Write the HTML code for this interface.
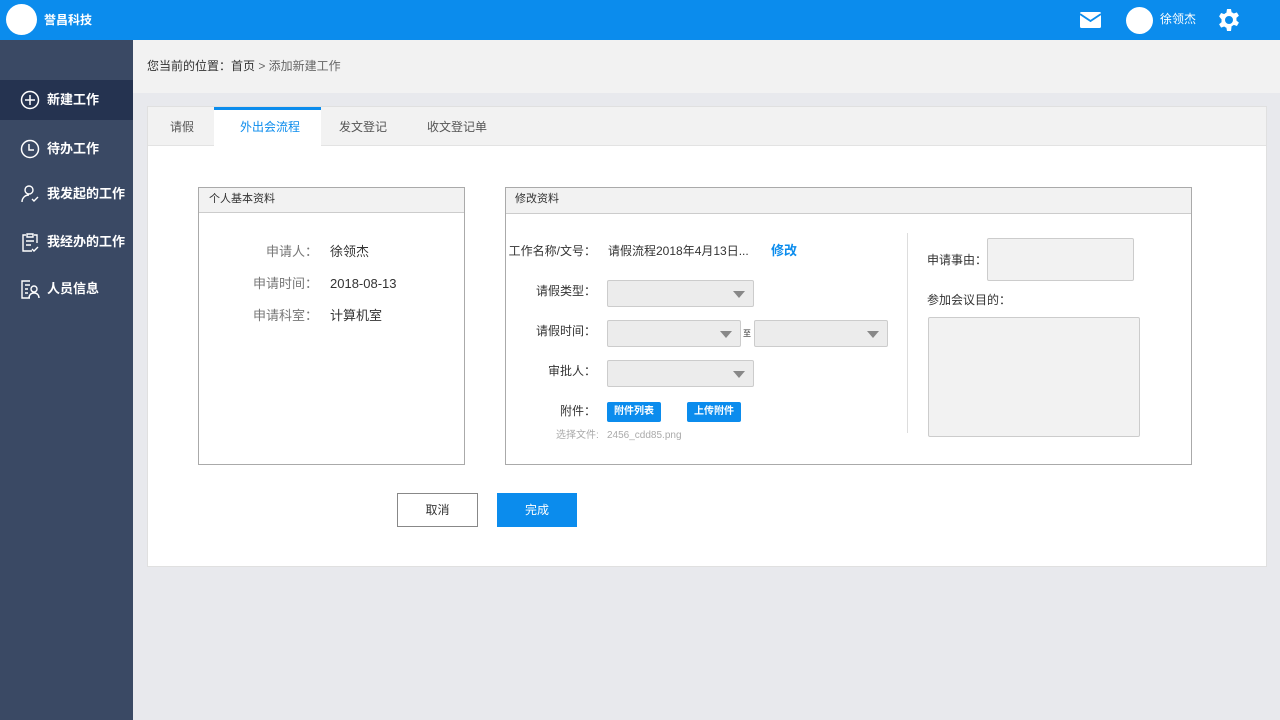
<!DOCTYPE html>
<html><head><meta charset="utf-8"><style>
*{margin:0;padding:0;box-sizing:border-box}
body{width:1280px;height:720px;overflow:hidden;background:#e8e9ed;font-family:"Liberation Sans","Noto Sans CJK SC",sans-serif;font-size:12px;color:#333;position:relative}
.a{position:absolute;line-height:1.2}
.hdr{left:0;top:0;width:1280px;height:40px;background:#0b8ced}
.side{left:0;top:40px;width:133px;height:680px;background:#3a4964}
.nav{left:0;width:133px;height:40px;color:#fff;font-size:13px;display:flex;align-items:center;padding-left:20px;font-weight:bold}
.nav svg{margin-right:7px}
.sel{background:#ececec;border:1px solid #ccc;border-radius:2px;height:27px}
.sel:after{content:"";position:absolute;right:8px;top:10px;border-left:6px solid transparent;border-right:6px solid transparent;border-top:7px solid #888}
.lab{text-align:right;width:150px;font-size:12px}
.btn{background:#0b8ced;color:#fff;font-size:10px;font-weight:bold;display:flex;align-items:center;justify-content:center;border-radius:2px}
</style></head><body>
<div class="a hdr"></div>
<div class="a" style="left:6px;top:4px;width:31px;height:31px;border-radius:50%;background:#fff"></div>
<div class="a" style="left:44px;top:13px;color:#fff;font-size:12px;font-weight:bold">誉昌科技</div>
<svg class="a" style="left:1080px;top:12px" width="21" height="16" viewBox="0 0 21 16"><rect x="0" y="0" width="21" height="16" rx="1.5" fill="#fff"/><path d="M0 2 L10.5 9 L21 2" stroke="#0b8ced" stroke-width="1.8" fill="none"/></svg>
<div class="a" style="left:1126px;top:7px;width:27px;height:27px;border-radius:50%;background:#fff"></div>
<div class="a" style="left:1160px;top:12px;color:#fff;font-size:12px">徐领杰</div>
<svg class="a" style="left:1217px;top:8px" width="24" height="24" viewBox="0 0 24 24"><path fill="#fff" fill-rule="evenodd" d="M10 1h4l.6 3.2a8 8 0 0 1 2.2 1.3l3.1-1.1 2 3.4-2.5 2.1a8 8 0 0 1 0 2.6l2.5 2.1-2 3.4-3.1-1.1a8 8 0 0 1-2.2 1.3L14 23h-4l-.6-3.2a8 8 0 0 1-2.2-1.3l-3.1 1.1-2-3.4 2.5-2.1a8 8 0 0 1 0-2.6L2.1 8.4l2-3.4 3.1 1.1a8 8 0 0 1 2.2-1.3zM12 8a4 4 0 1 0 0 8 4 4 0 0 0 0-8z"/></svg>

<div class="a side"></div>
<div class="a nav" style="top:80px;background:#253350"><svg width="20" height="20" viewBox="0 0 20 20"><circle cx="10" cy="10" r="8.5" stroke="#fff" stroke-width="1.5" fill="none"/><path d="M10 5v10M5 10h10" stroke="#fff" stroke-width="1.5"/></svg>新建工作</div>
<div class="a nav" style="top:129px"><svg width="20" height="20" viewBox="0 0 20 20"><circle cx="10" cy="10" r="8.5" stroke="#fff" stroke-width="1.5" fill="none"/><path d="M9 5v6h5" stroke="#fff" stroke-width="1.5" fill="none"/></svg>待办工作</div>
<div class="a nav" style="top:174px"><svg width="20" height="20" viewBox="0 0 20 20"><circle cx="9" cy="6" r="4" stroke="#fff" stroke-width="1.4" fill="none"/><path d="M2 18c0-4 3-7 7-7M12 15l2 2 4-4" stroke="#fff" stroke-width="1.4" fill="none"/></svg>我发起的工作</div>
<div class="a nav" style="top:222px"><svg width="20" height="20" viewBox="0 0 20 20"><path d="M6 3H3v16h9M14 3h3v8M7 2h6v3H7zM6 9h8M6 13h5M12 17l2 2 4-4" stroke="#fff" stroke-width="1.4" fill="none"/></svg>我经办的工作</div>
<div class="a nav" style="top:269px"><svg width="20" height="20" viewBox="0 0 20 20"><path d="M10 2H2v17h8M5 6h5M5 10h3M5 14h3" stroke="#fff" stroke-width="1.4" fill="none"/><circle cx="14" cy="10" r="3" stroke="#fff" stroke-width="1.4" fill="none"/><path d="M9 19c0-3 2-5 5-5s5 2 5 5" stroke="#fff" stroke-width="1.4" fill="none"/></svg>人员信息</div>

<div class="a" style="left:133px;top:40px;width:1147px;height:53px;background:#f2f2f2"></div>
<div class="a" style="left:147px;top:59px;font-size:12px;color:#333">您当前的位置：首页 <span style="color:#666">&gt; 添加新建工作</span></div>

<div class="a" style="left:147px;top:106px;width:1120px;height:461px;background:#fff;border:1px solid #e0e0e0"></div>
<div class="a" style="left:148px;top:107px;width:1118px;height:39px;background:#f2f2f2;border-bottom:1px solid #e3e3e3"></div>
<div class="a" style="left:170px;top:120px;color:#555">请假</div>
<div class="a" style="left:214px;top:107px;width:107px;height:40px;background:#fff;border-top:3px solid #0b8ced"></div>
<div class="a" style="left:240px;top:120px;color:#0b8ced">外出会流程</div>
<div class="a" style="left:339px;top:120px;color:#555">发文登记</div>
<div class="a" style="left:427px;top:120px;color:#555">收文登记单</div>

<div class="a" style="left:198px;top:187px;width:267px;height:278px;border:1px solid #aaa"></div>
<div class="a" style="left:199px;top:188px;width:265px;height:25px;background:#f2f2f2;border-bottom:1px solid #ccc"></div>
<div class="a" style="left:209px;top:193px;font-size:11px">个人基本资料</div>
<div class="a" style="left:218px;top:244px;width:100px;text-align:right;color:#777;font-size:13px">申请人：</div>
<div class="a" style="left:330px;top:244px;font-size:13px">徐领杰</div>
<div class="a" style="left:218px;top:276px;width:100px;text-align:right;color:#777;font-size:13px">申请时间：</div>
<div class="a" style="left:330px;top:276px;font-size:13px">2018-08-13</div>
<div class="a" style="left:218px;top:308px;width:100px;text-align:right;color:#777;font-size:13px">申请科室：</div>
<div class="a" style="left:330px;top:308px;font-size:13px">计算机室</div>

<div class="a" style="left:505px;top:187px;width:687px;height:278px;border:1px solid #aaa"></div>
<div class="a" style="left:506px;top:188px;width:685px;height:26px;background:#f2f2f2;border-bottom:1px solid #ccc"></div>
<div class="a" style="left:515px;top:193px;font-size:11px">修改资料</div>
<div class="a lab" style="left:446px;top:244px">工作名称/文号：</div>
<div class="a" style="left:608px;top:244px">请假流程2018年4月13日...</div>
<div class="a" style="left:771px;top:243px;color:#0b8ced;font-weight:bold;font-size:13px">修改</div>
<div class="a lab" style="left:446px;top:284px">请假类型：</div>
<div class="a sel" style="left:607px;top:280px;width:147px"></div>
<div class="a lab" style="left:446px;top:324px">请假时间：</div>
<div class="a sel" style="left:607px;top:320px;width:134px"></div>
<div class="a" style="left:743px;top:329px;font-size:8px">至</div>
<div class="a sel" style="left:754px;top:320px;width:134px"></div>
<div class="a lab" style="left:446px;top:364px">审批人：</div>
<div class="a sel" style="left:607px;top:360px;width:147px"></div>
<div class="a lab" style="left:446px;top:404px">附件：</div>
<div class="a btn" style="left:607px;top:402px;width:54px;height:20px">附件列表</div>
<div class="a btn" style="left:687px;top:402px;width:54px;height:20px">上传附件</div>
<div class="a" style="left:556px;top:430px;font-size:10px;color:#aaa">选择文件:</div>
<div class="a" style="left:607px;top:430px;font-size:10px;color:#aaa">2456_cdd85.png</div>
<div class="a" style="left:907px;top:233px;width:1px;height:200px;background:#ddd"></div>
<div class="a" style="left:927px;top:253px">申请事由：</div>
<div class="a" style="left:987px;top:238px;width:147px;height:43px;background:#f2f2f2;border:1px solid #ccc;border-radius:2px"></div>
<div class="a" style="left:927px;top:293px">参加会议目的：</div>
<div class="a" style="left:928px;top:317px;width:212px;height:120px;background:#f2f2f2;border:1px solid #ccc;border-radius:2px"></div>

<div class="a" style="left:397px;top:493px;width:81px;height:34px;border:1px solid #888;display:flex;align-items:center;justify-content:center;background:#fff">取消</div>
<div class="a" style="left:497px;top:493px;width:80px;height:34px;background:#0b8ced;color:#fff;display:flex;align-items:center;justify-content:center">完成</div>
</body></html>
